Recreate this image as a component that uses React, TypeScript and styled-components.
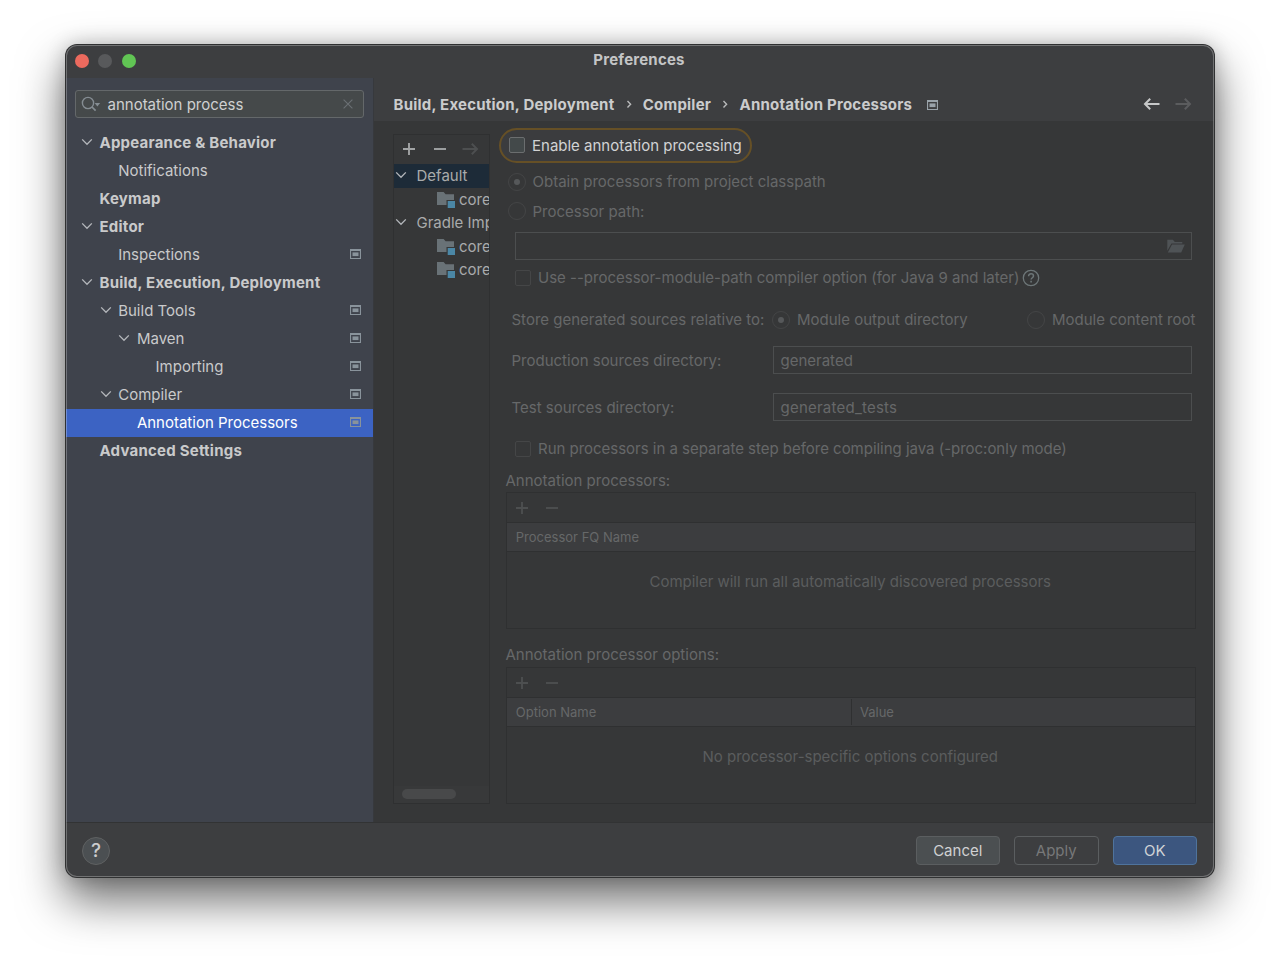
import React from 'react';
import styled, { createGlobalStyle, css } from 'styled-components';

const Global = createGlobalStyle`
  * { box-sizing: border-box; }
  body {
    margin: 0;
    background: #fff;
    overflow: hidden;
    font-family: Inter, 'Liberation Sans', sans-serif;
    font-size: 15px;
    letter-spacing: 0;
  }
  svg { display: block; flex: none; }
`;

const Desktop = styled.div`
  width: 1280px;
  height: 964px;
  padding: 45px 66px 0;
  background: #fff;
`;

const Window = styled.div`
  position: relative;
  width: 1148px;
  height: 832px;
  display: flex;
  flex-direction: column;
  border-radius: 11px;
  background: #3d3e40;
  box-shadow: 0 0 0 1px #303132, 0 22px 46px 2px rgba(0, 0, 0, 0.56), 0 0 20px rgba(0, 0, 0, 0.22);
  &::after {
    content: '';
    position: absolute;
    inset: 0;
    border-radius: 11px;
    box-shadow: inset 0 0 0 1px rgba(255, 255, 255, 0.27);
    pointer-events: none;
  }
`;

const TitleBar = styled.div`
  height: 33px;
  flex: none;
  display: grid;
  grid-template-columns: 1fr auto 1fr;
  align-items: center;
  padding: 0 9px 2px;
`;

const Lights = styled.div`
  display: flex;
  gap: 9.4px;
`;

const Light = styled.span<{ $color: string }>`
  width: 14px;
  height: 14px;
  border-radius: 50%;
  background: ${(p) => p.$color};
`;

const Title = styled.div`
  color: #c4c5c6;
  font-weight: 700;
  letter-spacing: 0.2px;
  padding: 0 2px 2px 0;
`;

const Body = styled.div`
  display: flex;
  height: 744px;
  flex: none;
`;

const Sidebar = styled.div`
  width: 308px;
  flex: none;
  background: #3f434c;
  border-right: 1px solid #37393d;
`;

const Search = styled.div`
  height: 28px;
  margin: 12px 9px 10px;
  display: flex;
  align-items: center;
  padding: 0 10.5px 0 5px;
  border: 1px solid #64686a;
  border-radius: 3px;
  background: #45494a;
  color: #cfd0d1;
`;

const SearchText = styled.span`
  flex: 1;
  margin-left: 6.5px;
`;

const TreeRow = styled.div<{ $level: number; $bold?: boolean; $selected?: boolean }>`
  height: 28.08px;
  display: flex;
  align-items: center;
  padding-left: ${(p) => 15 + p.$level * 18.7}px;
  padding-right: 12px;
  color: ${(p) => (p.$selected ? '#fff' : '#c9cacb')};
  background: ${(p) => (p.$selected ? '#3c63c3' : 'transparent')};
  font-weight: ${(p) => (p.$bold ? 700 : 400)};
  letter-spacing: ${(p) => (p.$bold ? 0.23 : 0)}px;
  svg { margin-bottom: 1px; }
`;

const Twisty = styled.span`
  width: 18.5px;
  flex: none;
`;

const Grow = styled.span`
  flex: 1;
  white-space: nowrap;
`;

const Main = styled.div`
  flex: 1;
  min-width: 0;
  display: flex;
  flex-direction: column;
  background: #363738;
`;

const Header = styled.div`
  height: 43px;
  flex: none;
  display: flex;
  align-items: center;
  padding: 9px 22px 0 19.5px;
  background: #3d3e40;
  color: #cbcccd;
  font-weight: 700;
  letter-spacing: 0.23px;
`;

const Crumb = styled.span`
  white-space: nowrap;
`;

const CrumbSep = styled.span`
  width: 28.3px;
  display: flex;
  justify-content: center;
`;

const CrumbBadge = styled.span`
  margin: 1px 0 0 15px;
`;

const Nav = styled.div`
  margin-left: auto;
  display: flex;
  gap: 15px;
`;

const Panels = styled.div`
  flex: 1;
  display: flex;
  padding: 0 0 0 19px;
`;

const ProfilePanel = styled.div`
  width: 97px;
  height: 670px;
  margin-top: 13px;
  display: flex;
  flex-direction: column;
  border: 1px solid #2f3031;
  overflow: hidden;
  color: #a9abac;
`;

const ProfileTools = styled.div`
  height: 29px;
  flex: none;
  display: flex;
  align-items: center;
  gap: 14.5px;
  padding: 0 0 2px 7.3px;
`;

const ProfileRow = styled.div<{ $selected?: boolean; $child?: boolean }>`
  height: 23.5px;
  flex: none;
  display: flex;
  align-items: center;
  white-space: nowrap;
  padding-left: ${(p) => (p.$child ? 43 : 1)}px;
  background: ${(p) => (p.$selected ? '#1d2b38' : 'transparent')};
  svg { margin: 0 ${(p) => (p.$child ? 4 : 9.5)}px 1px 0; }
`;

const ScrollTrack = styled.div`
  height: 17px;
  margin-top: auto;
  padding: 3px 8px;
  background: #38393a;
`;

const ScrollThumb = styled.div`
  width: 54px;
  height: 10px;
  border-radius: 5px;
  background: #48494a;
`;

const Form = styled.div`
  flex: 1;
  padding: 7px 18px 0 15.5px;
  color: #666869;
`;

const Highlight = styled.div`
  width: 253px;
  height: 35px;
  margin-left: -6.5px;
  display: flex;
  align-items: center;
  padding: 0 0 1px 8px;
  border: 2px solid #665026;
  border-radius: 18px;
  background: #3b3c3e;
  color: #d2d3d4;
`;

const Line = styled.div<{ $h: number; $left?: number; $top?: number }>`
  height: ${(p) => p.$h}px;
  display: flex;
  align-items: center;
  white-space: nowrap;
  padding-left: ${(p) => p.$left ?? 0}px;
  padding-top: ${(p) => p.$top ?? 0}px;
`;

const Check = styled.span<{ $active?: boolean }>`
  width: 16px;
  height: 16px;
  margin-right: 7px;
  flex: none;
  border-radius: 2px;
  border: 1px solid #454647;
  ${(p) =>
    p.$active &&
    css`
      border-color: #6b6e6f;
      background: #43494a;
    `}
`;

const Radio = styled.span<{ $on?: boolean }>`
  width: 18px;
  height: 18px;
  margin-right: 7px;
  flex: none;
  display: grid;
  place-items: center;
  border-radius: 50%;
  border: 1px solid #444546;
  &::before {
    content: '';
    width: 6px;
    height: 6px;
    border-radius: 50%;
    background: ${(p) => (p.$on ? '#56585a' : 'transparent')};
  }
`;

const Label = styled.span<{ $ls?: number; $w?: number }>`
  white-space: nowrap;
  letter-spacing: ${(p) => p.$ls ?? 0}px;
  width: ${(p) => (p.$w ? `${p.$w}px` : 'auto')};
`;

const Hint = styled.span`
  margin-left: 3px;
`;

const Field = styled.div<{ $ls?: number }>`
  flex: 1;
  height: 28px;
  display: flex;
  align-items: center;
  padding: 0 6px 0 6.5px;
  margin-right: 4px;
  border: 1px solid #4c4e4f;
  letter-spacing: ${(p) => p.$ls ?? 0}px;
`;

const Table = styled.div`
  height: 137px;
  display: flex;
  flex-direction: column;
  border: 1px solid #2f3031;
  margin-bottom: 13px;
`;

const TableTools = styled.div`
  height: 29px;
  flex: none;
  display: flex;
  align-items: center;
  gap: 14.5px;
  padding-left: 7px;
`;

const TableHead = styled.div`
  height: 30px;
  flex: none;
  display: flex;
  align-items: center;
  background: #3c3d3f;
  border: solid #2f3031;
  border-width: 1px 0;
  font-size: 13px;
`;

const HeadCell = styled.div`
  flex: 1;
  height: 26px;
  display: flex;
  align-items: center;
  padding-left: 9.3px;
  & + & { border-left: 1px solid #2f3031; padding-left: 8px; }
`;

const Empty = styled.div<{ $ls?: number }>`
  height: 59px;
  display: flex;
  align-items: center;
  justify-content: center;
  padding-right: 1px;
  color: #5b5d5e;
  letter-spacing: ${(p) => p.$ls ?? 0}px;
`;

const Footer = styled.div`
  flex: 1;
  display: flex;
  align-items: center;
  padding: 1px 17px 0 16px;
  gap: 14px;
  border-top: 1px solid #323334;
`;

const Help = styled.div`
  width: 28px;
  height: 28px;
  margin-right: auto;
  display: grid;
  place-items: center;
  border-radius: 50%;
  border: 1px solid #5f6162;
  background: #4b4f52;
  color: #cbcccd;
  font-size: 19px;
  font-weight: 500;
`;

const Button = styled.div<{ $kind: 'plain' | 'disabled' | 'primary' }>`
  width: 84.5px;
  height: 29px;
  display: grid;
  place-items: center;
  border-radius: 4px;
  border: 1px solid ${(p) => (p.$kind === 'primary' ? '#4f739c' : '#5b5e60')};
  background: ${(p) => ({ plain: '#4b4f51', disabled: 'transparent', primary: '#3c567f' })[p.$kind]};
  color: ${(p) => ({ plain: '#d0d1d2', disabled: '#777879', primary: '#d0d3d6' })[p.$kind]};
`;

const Chevron = ({ color = '#b4b7bb' }: { color?: string }) => (
  <svg width="12" height="12" viewBox="0 0 12 12" fill="none" stroke={color} strokeWidth="1.3">
    <path d="M1.2 3.4 6 8.3l4.8-4.9" />
  </svg>
);

const ProjectIcon = ({ color = '#89939b' }: { color?: string }) => (
  <svg width="11" height="10" viewBox="0 0 11 10">
    <path fill={color} fillRule="evenodd" d="M0 0h11v10H0zM1.1 2h8.8v6.9H1.1z" />
    <path fill={color} d="M2.5 3.4h6v3.7h-6z" />
  </svg>
);

const Plus = ({ color }: { color: string }) => (
  <svg width="16" height="16" viewBox="0 0 16 16" stroke={color} strokeWidth="1.9">
    <path d="M2 8h12M8 2v12" />
  </svg>
);

const Minus = ({ color }: { color: string }) => (
  <svg width="16" height="16" viewBox="0 0 16 16" stroke={color} strokeWidth="1.9">
    <path d="M2 8h12" />
  </svg>
);

const Arrow = ({ color, back }: { color: string; back?: boolean }) => (
  <svg width="17" height="14" viewBox="0 0 17 14" fill="none" stroke={color} strokeWidth="2">
    <path d={back ? 'M16.5 7H2M7.2 1.8 2 7l5.2 5.2' : 'M.5 7H15M9.8 1.8 15 7l-5.2 5.2'} />
  </svg>
);

const Separator = () => (
  <svg width="6" height="10" viewBox="0 0 6 10" fill="none" stroke="#b9babb" strokeWidth="1.4">
    <path d="M1.5 2 4.6 5.2 1.5 8.4" />
  </svg>
);

const ModuleIcon = () => (
  <svg width="18" height="18" viewBox="0 0 18 18">
    <path fill="#697277" d="M0 2h6.6l2 2.2H17V10H9.5v5H0z" />
    <path fill="#4b87a6" d="M10.7 11H18v7h-7.3z" />
  </svg>
);

const FolderIcon = () => (
  <svg width="18" height="14" viewBox="0 0 18 14" fill="#4f5356">
    <path d="M.3.8h5.6l1.9 2.2h7.5v1.4H4.4L.3 11.8z" />
    <path d="M5 5.4h12.8l-3.6 8H.8z" />
  </svg>
);

const SearchIcon = () => (
  <svg width="20" height="16" viewBox="0 0 20 16" fill="none" stroke="#858d93" strokeWidth="1.4">
    <circle cx="7" cy="7" r="5.6" />
    <path d="M11 11l3.6 3.6" strokeWidth="1.7" />
    <path d="M13.6 7h5.6l-2.8 3.4z" fill="#858d93" stroke="none" />
  </svg>
);

const ClearIcon = () => (
  <svg width="10" height="10" viewBox="0 0 10 10" stroke="#6b7074" strokeWidth="1.1">
    <path d="M.6.6l8.8 8.8M9.4.6.6 9.4" />
  </svg>
);

const HintIcon = () => (
  <svg width="18" height="18" viewBox="0 0 18 18" fill="none" stroke="#6d7678" strokeWidth="1.3">
    <circle cx="9" cy="9" r="7.7" />
    <path d="M6.6 7.2c0-3.3 4.9-3 4.9-.2 0 1.7-2.4 1.8-2.4 3.6" strokeWidth="1.5" />
    <path d="M9.1 11.8v1.6" strokeWidth="1.6" />
  </svg>
);

type Node = { text: string; level: number; open?: boolean; bold?: boolean; project?: boolean; selected?: boolean };

const nodes: Node[] = [
  { text: 'Appearance & Behavior', level: 0, open: true, bold: true },
  { text: 'Notifications', level: 1 },
  { text: 'Keymap', level: 0, bold: true },
  { text: 'Editor', level: 0, open: true, bold: true },
  { text: 'Inspections', level: 1, project: true },
  { text: 'Build, Execution, Deployment', level: 0, open: true, bold: true },
  { text: 'Build Tools', level: 1, open: true, project: true },
  { text: 'Maven', level: 2, open: true, project: true },
  { text: 'Importing', level: 3, project: true },
  { text: 'Compiler', level: 1, open: true, project: true },
  { text: 'Annotation Processors', level: 2, project: true, selected: true },
  { text: 'Advanced Settings', level: 0, bold: true },
];

export default function App() {
  return (
    <Desktop>
      <Global />
      <Window>
        <TitleBar>
          <Lights>
            <Light $color="#ec6a5e" />
            <Light $color="#58595b" />
            <Light $color="#61c554" />
          </Lights>
          <Title>Preferences</Title>
        </TitleBar>
        <Body>
          <Sidebar>
            <Search>
              <SearchIcon />
              <SearchText>annotation process</SearchText>
              <ClearIcon />
            </Search>
            {nodes.map((n) => (
              <TreeRow key={n.text} $level={n.level} $bold={n.bold} $selected={n.selected}>
                <Twisty>{n.open && <Chevron />}</Twisty>
                <Grow>{n.text}</Grow>
                {n.project && <ProjectIcon />}
              </TreeRow>
            ))}
          </Sidebar>
          <Main>
            <Header>
              <Crumb>Build, Execution, Deployment</Crumb>
              <CrumbSep><Separator /></CrumbSep>
              <Crumb>Compiler</Crumb>
              <CrumbSep><Separator /></CrumbSep>
              <Crumb>Annotation Processors</Crumb>
              <CrumbBadge><ProjectIcon color="#9aa3aa" /></CrumbBadge>
              <Nav>
                <Arrow back color="#c6c7c8" />
                <Arrow color="#5b5c5e" />
              </Nav>
            </Header>
            <Panels>
              <ProfilePanel>
                <ProfileTools>
                  <Plus color="#a2a4a5" />
                  <Minus color="#a2a4a5" />
                  <Arrow color="#4d4f50" />
                </ProfileTools>
                <ProfileRow $selected><Chevron />Default</ProfileRow>
                <ProfileRow $child><ModuleIcon />core</ProfileRow>
                <ProfileRow><Chevron />Gradle Imp</ProfileRow>
                <ProfileRow $child><ModuleIcon />core</ProfileRow>
                <ProfileRow $child><ModuleIcon />core</ProfileRow>
                <ScrollTrack><ScrollThumb /></ScrollTrack>
              </ProfilePanel>
              <Form>
                <Highlight><Check $active /><Label>Enable annotation processing</Label></Highlight>
                <Line $h={37} $left={2}><Radio $on /><Label>Obtain processors from project classpath</Label></Line>
                <Line $h={22} $left={2}><Radio /><Label>Processor path:</Label></Line>
                <Line $h={48} $left={9.5}>
                  <Field><Grow /><FolderIcon /></Field>
                </Line>
                <Line $h={15} $left={9.5}>
                  <Check /><Label>Use --processor-module-path compiler option (for Java 9 and later)</Label><Hint><HintIcon /></Hint>
                </Line>
                <Line $h={69} $left={6}>
                  <Label $w={260.5}>Store generated sources relative to:</Label>
                  <Radio $on /><Label $w={230}>Module output directory</Label>
                  <Radio /><Label>Module content root</Label>
                </Line>
                <Line $h={12} $left={6}><Label $w={261.5}>Production sources directory:</Label><Field>generated</Field></Line>
                <Line $h={82} $left={6}><Label $w={261.5}>Test sources directory:</Label><Field $ls={0.23}>generated_tests</Field></Line>
                <Line $h={1} $left={9.5}><Check /><Label $ls={-0.02}>Run processors in a separate step before compiling java (-proc:only mode)</Label></Line>
                <Line $h={43} $top={20}><Label>Annotation processors:</Label></Line>
                <Table>
                  <TableTools><Plus color="#4d4f50" /><Minus color="#4d4f50" /></TableTools>
                  <TableHead><HeadCell>Processor FQ Name</HeadCell></TableHead>
                  <Empty $ls={-0.03}>Compiler will run all automatically discovered processors</Empty>
                </Table>
                <Line $h={25}><Label>Annotation processor options:</Label></Line>
                <Table>
                  <TableTools><Plus color="#4d4f50" /><Minus color="#4d4f50" /></TableTools>
                  <TableHead><HeadCell>Option Name</HeadCell><HeadCell>Value</HeadCell></TableHead>
                  <Empty $ls={-0.01}>No processor-specific options configured</Empty>
                </Table>
              </Form>
            </Panels>
          </Main>
        </Body>
        <Footer>
          <Help>?</Help>
          <Button $kind="plain">Cancel</Button>
          <Button $kind="disabled">Apply</Button>
          <Button $kind="primary">OK</Button>
        </Footer>
      </Window>
    </Desktop>
  );
}
